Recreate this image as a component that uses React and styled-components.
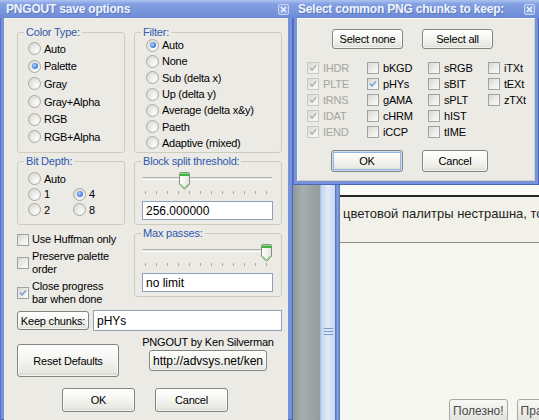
import React from 'react';
import styled, { createGlobalStyle } from 'styled-components';

const GlobalStyle = createGlobalStyle`
  html, body { margin: 0; padding: 0; background: #ebeae5; }
  body { font-family: "Liberation Sans", Arial, sans-serif; font-size: 11px; color: #000; }
`;

const Screen = styled.div`
  display: flex;
  width: 539px;
  height: 420px;
  overflow: hidden;
`;

/* ---------- window chrome ---------- */

const Window = styled.div`
  flex: none;
  width: ${p => p.$w}px;
  display: flex;
  flex-direction: column;
  background: #7592da;
  box-shadow: inset 1px 0 #5573c2, inset -1px 0 #4a68b4, inset 0 -1px #4a68b4;
`;

const TitleBar = styled.div`
  height: 18px;
  flex: none;
  display: flex;
  align-items: center;
  justify-content: space-between;
  padding: 0 4px 0 ${p => p.$pad}px;
  background: linear-gradient(#aec4f0, #83a0e2 22%, #7694db 70%, #6c8ad5);
`;

const TitleText = styled.span`
  font: bold 12px "Liberation Sans", Arial, sans-serif;
  letter-spacing: -0.2px;
  color: #f0f4fc;
  text-shadow: 1px 1px 0 rgba(40, 60, 130, 0.35);
  white-space: nowrap;
`;

const CloseBox = styled.span`
  width: 11px;
  height: 11px;
  box-sizing: border-box;
  border: 1px solid #cad7f4;
  border-radius: 2px;
  background: #8aa6e4;
  display: flex;
  align-items: center;
  justify-content: center;
`;

const Panel = styled.div`
  flex: 1;
  margin: 0 ${p => p.$r}px ${p => p.$b}px ${p => p.$l}px;
  background: #ebeae5;
  padding: ${p => p.$padding};
  display: flex;
  flex-direction: column;
  box-shadow: ${p => (p.$inset ? 'inset 1px 1px #f7f7f4, inset -1px -1px #cfcfc8' : 'none')};
`;

/* ---------- groups ---------- */

const Grid = styled.div`
  display: grid;
  grid-template-columns: 108px 148px;
  column-gap: 9px;
  row-gap: 2px;
  align-items: start;
`;

const Group = styled.fieldset`
  margin: 0;
  padding: 0;
  min-width: 0;
  height: ${p => p.$h}px;
  box-sizing: border-box;
  border: 1px solid #cdcdbf;
  border-radius: 3px;
`;

const Legend = styled.legend`
  margin-left: 6px;
  padding: 0 2px;
  line-height: 12px;
  letter-spacing: -0.2px;
  color: #2f58ad;
`;

const Options = styled.div`
  padding: ${p => p.$top}px 0 0 ${p => p.$left}px;
  margin-top: ${p => p.$mt || 0}px;
`;

const TwoCol = styled.div`
  display: grid;
  grid-template-columns: 45px 45px;
`;

const OptionRow = styled.div`
  display: flex;
  align-items: center;
  gap: 3px;
  height: ${p => p.$h}px;
  white-space: nowrap;
  letter-spacing: -0.25px;
`;

const RadioDot = styled.span`
  flex: none;
  width: 13px;
  height: 13px;
  box-sizing: border-box;
  border-radius: 50%;
  border: 1px solid #a9aba6;
  background: radial-gradient(circle at 70% 70%, #fdfdfc, #e4e4df 60%, #d3d3cc);
  display: flex;
  align-items: center;
  justify-content: center;
  &::after {
    content: '';
    display: ${p => (p.$on ? 'block' : 'none')};
    width: 6px;
    height: 6px;
    border-radius: 50%;
    background: radial-gradient(circle at 40% 40%, #b7d6ff, #4c86e0 55%, #2458c0);
  }
`;

const Box = styled.span`
  flex: none;
  width: 12px;
  height: 12px;
  box-sizing: border-box;
  border: 1px solid ${p => (p.$dim ? '#c9c9c3' : '#9ea2a8')};
  background: linear-gradient(135deg, #d9d9d3, #efefeb 60%, #fbfbfa);
  display: flex;
  align-items: center;
  justify-content: center;
`;

const CheckRow = styled.div`
  display: flex;
  align-items: center;
  gap: ${p => p.$gap}px;
  line-height: 13px;
  letter-spacing: -0.2px;
  white-space: nowrap;
  color: ${p => (p.$dim ? '#a6a6a0' : '#000')};
`;

const CheckColumn = styled.div`
  display: flex;
  flex-direction: column;
  gap: 4px;
  padding-top: 6px;
`;

/* ---------- slider ---------- */

const Slider = styled.div`
  position: relative;
  width: 129px;
  height: 29px;
  box-sizing: border-box;
  margin: 5px 0 0 8px;
  padding-top: 5px;
`;

const Track = styled.div`
  height: 3px;
  box-sizing: border-box;
  border-top: 1px solid #b3b3ab;
  border-bottom: 1px solid #fff;
  background: #e2e2da;
`;

const Ticks = styled.div`
  display: flex;
  justify-content: space-between;
  margin-top: 11px;
  padding: 0 5px 0 2px;
  & > i {
    width: 1px;
    height: 3px;
    background: #a8a8a0;
  }
`;

const Thumb = styled.svg`
  position: absolute;
  top: 0;
  left: ${p => p.$x}px;
`;

const Field = styled.div`
  height: ${p => p.$h}px;
  width: ${p => (p.$w ? `${p.$w}px` : 'auto')};
  flex: ${p => (p.$w ? 'none' : 1)};
  margin-left: ${p => p.$ml || 0}px;
  box-sizing: border-box;
  border: 1px solid #8ea0b6;
  background: #fff;
  padding-left: 3px;
  display: flex;
  align-items: center;
  font-size: 12px;
`;

/* ---------- buttons ---------- */

const Button = styled.button`
  flex: none;
  width: ${p => p.$w}px;
  height: ${p => p.$h}px;
  padding: 0;
  font: ${p => p.$fs || 11}px "Liberation Sans", Arial, sans-serif;
  letter-spacing: ${p => (p.$fs ? 0 : -0.2)}px;
  color: #000;
  border: 1px solid #84847e;
  border-radius: 3px;
  background: linear-gradient(#ffffff, #f5f5f1 45%, #e9e9e3 85%, #d5d5cd);
  box-shadow: ${p => (p.$focus
    ? 'inset 0 0 0 1px #cfe0f6, inset 0 0 0 2px #93b4e2'
    : 'inset 0 0 0 1px rgba(255,255,255,0.7)')};
`;

const KeepRow = styled.div`
  display: flex;
  align-items: center;
  gap: 4px;
  margin-top: 4px;
  width: 265px;
  height: 21px;
`;

const CreditRow = styled.div`
  display: grid;
  grid-template-columns: 108px 148px;
  column-gap: 9px;
  margin-top: 5px;
`;

const Credit = styled.div`
  display: flex;
  flex-direction: column;
  align-items: center;
  gap: 1px;
  line-height: 13px;
  letter-spacing: -0.2px;
`;

const ResetSlot = styled.div`
  padding-top: 8px;
`;

const ButtonRow = styled.div`
  display: flex;
  gap: ${p => p.$gap}px;
  margin-top: ${p => p.$mt}px;
  padding-left: ${p => p.$pl}px;
`;

/* ---------- chunks dialog ---------- */

const RightSide = styled.div`
  flex: 1;
  display: flex;
  flex-direction: column;
  min-width: 0;
`;

const ChunkGrid = styled.div`
  display: grid;
  grid-template-columns: 60px 61px 60px 1fr;
  grid-template-rows: repeat(5, 16px);
  grid-auto-flow: column;
  margin-top: 11px;
  padding-left: 10px;
`;

/* ---------- window behind ---------- */

const Behind = styled.div`
  flex: 1;
  display: flex;
  min-height: 0;
`;

const Wallpaper = styled.div`
  width: 27px;
  flex: none;
  background: linear-gradient(90deg, #8f9999, #a6aead 35%, #9ba4a3 70%, #949d9c);
`;

const Rail = styled.div`
  width: 15px;
  flex: none;
  box-sizing: border-box;
  border-left: 1px solid #a9bfdf;
  background: linear-gradient(90deg, #c2d4ec, #e0eaf7 45%, #c9d9ee);
  display: flex;
  justify-content: center;
  padding-top: 143px;
`;

const RailEdge = styled.div`
  width: 5px;
  flex: none;
  background: linear-gradient(90deg, #4f70b6, #86a3de 50%, #5676be);
`;

const Page = styled.div`
  flex: 1;
  display: flex;
  flex-direction: column;
  background: #f7f7f2;
  overflow: hidden;
  font-family: "Liberation Sans", Arial, sans-serif;
`;

const PageTop = styled.div`
  height: 10px;
  flex: none;
  background: #fafaf7;
  border-bottom: 2px solid #262626;
`;

const Quote = styled.div`
  height: 46px;
  flex: none;
  box-sizing: border-box;
  background: #f2f1e9;
  border-bottom: 1px solid #8c8c86;
  padding: 9px 0 0 3px;
  font-size: 13px;
  line-height: 15px;
  color: #1e1e1e;
  white-space: nowrap;
`;

const PageActions = styled.div`
  margin-top: auto;
  margin-bottom: -2px;
  display: flex;
  gap: 9px;
  padding-left: 109px;
`;

const PageButton = styled.span`
  flex: none;
  height: 23px;
  box-sizing: border-box;
  padding: 0 3px;
  display: flex;
  align-items: center;
  border: 1px solid #a9a9a3;
  border-radius: 3px;
  background: linear-gradient(#f8f8f6, #e2e2dd);
  font-size: 12px;
  color: #4a4a4a;
  white-space: nowrap;
`;

/* ---------- small pieces ---------- */

const CloseIcon = () => (
  <CloseBox>
    <svg width="7" height="7" viewBox="0 0 7 7">
      <path d="M1 1L6 6M6 1L1 6" stroke="#f2f6ff" strokeWidth="1.4" />
    </svg>
  </CloseBox>
);

const Radio = ({ on, h, children }) => (
  <OptionRow $h={h}>
    <RadioDot $on={on} />
    <span>{children}</span>
  </OptionRow>
);

const Check = ({ on, dim, gap = 3, children }) => (
  <CheckRow $gap={gap} $dim={dim}>
    <Box $dim={dim}>
      {on && (
        <svg width="8" height="8" viewBox="0 0 8 8">
          <path d="M1 3.6L3 6L7 1.3" fill="none" stroke={dim ? '#b4b4ae' : '#7ea3d8'} strokeWidth="1.6" />
        </svg>
      )}
    </Box>
    <span>{children}</span>
  </CheckRow>
);

const SliderThumb = ({ x }) => (
  <Thumb $x={x} width="11" height="18" viewBox="0 0 11 18">
    <defs>
      <linearGradient id="tb" x1="0" y1="0" x2="1" y2="0">
        <stop offset="0" stopColor="#ffffff" />
        <stop offset="1" stopColor="#e3e3dc" />
      </linearGradient>
    </defs>
    <path d="M1.5 0.5H9.5Q10.5 0.5 10.5 1.5V12.3L5.5 17.3L0.5 12.3V1.5Q0.5 0.5 1.5 0.5Z" fill="url(#tb)" stroke="#7f8e86" />
    <rect x="1" y="1" width="9" height="3" fill="#3fb43c" />
    <rect x="1" y="1" width="9" height="1" fill="#8bdc80" />
    <path d="M1.5 12L5.5 16L9.5 12" fill="none" stroke="#5cbf4c" />
  </Thumb>
);

const SliderBlock = ({ x, value }) => (
  <>
    <Slider>
      <Track />
      <Ticks>{Array.from({ length: 12 }, (_, i) => <i key={i} />)}</Ticks>
      <SliderThumb x={x} />
    </Slider>
    <Field $h={19} $w={131} $ml={7}>{value}</Field>
  </>
);

const chunkCols = [
  [['IHDR', 1, 1], ['PLTE', 1, 1], ['tRNS', 1, 1], ['IDAT', 1, 1], ['IEND', 1, 1]],
  [['bKGD'], ['pHYs', 1], ['gAMA'], ['cHRM'], ['iCCP']],
  [['sRGB'], ['sBIT'], ['sPLT'], ['hIST'], ['tIME']],
  [['iTXt'], ['tEXt'], ['zTXt']],
];

export default function App() {
  return (
    <Screen>
      <GlobalStyle />
      <Window $w={293}>
        <TitleBar $pad={6}>
          <TitleText>PNGOUT save options</TitleText>
          <CloseIcon />
        </TitleBar>
        <Panel $l={4} $r={5} $b={0} $padding="8px 0 0 13px">
          <Grid>
            <Group $h={127}>
              <Legend>Color Type:</Legend>
              <Options $top={2} $left={10}>
                {['Auto', 'Palette', 'Gray', 'Gray+Alpha', 'RGB', 'RGB+Alpha'].map(t => (
                  <Radio key={t} h={17.6} on={t === 'Palette'}>{t}</Radio>
                ))}
              </Options>
            </Group>
            <Group $h={127}>
              <Legend>Filter:</Legend>
              <Options $top={0} $mt={-1} $left={11}>
                {['Auto', 'None', 'Sub (delta x)', 'Up (delta y)', 'Average (delta x&y)', 'Paeth', 'Adaptive (mixed)'].map(t => (
                  <Radio key={t} h={16.3} on={t === 'Auto'}>{t}</Radio>
                ))}
              </Options>
            </Group>

            <Group $h={70}>
              <Legend>Bit Depth:</Legend>
              <Options $top={4} $left={10}>
                <Radio h={15.5}>Auto</Radio>
                <TwoCol>
                  <Radio h={15.5}>1</Radio>
                  <Radio h={15.5} on>4</Radio>
                  <Radio h={15.5}>2</Radio>
                  <Radio h={15.5}>8</Radio>
                </TwoCol>
              </Options>
            </Group>
            <Group $h={70}>
              <Legend>Block split threshold:</Legend>
              <SliderBlock x={36} value="256.000000" />
            </Group>

            <CheckColumn>
              <Check>Use Huffman only</Check>
              <Check>Preserve palette<br />order</Check>
              <Check on>Close progress<br />bar when done</Check>
            </CheckColumn>
            <Group $h={70}>
              <Legend>Max passes:</Legend>
              <SliderBlock x={118} value="no limit" />
            </Group>
          </Grid>

          <KeepRow>
            <Button $w={72} $h={19}>Keep chunks:</Button>
            <Field $h={21}>pHYs</Field>
          </KeepRow>

          <CreditRow>
            <ResetSlot>
              <Button $w={102} $h={33}>Reset Defaults</Button>
            </ResetSlot>
            <Credit>
              <span>PNGOUT by Ken Silverman</span>
              <Button $w={118} $h={21} $fs={12}>http://advsys.net/ken</Button>
            </Credit>
          </CreditRow>

          <ButtonRow $gap={20} $mt={11} $pl={45}>
            <Button $w={73} $h={24}>OK</Button>
            <Button $w={73} $h={24}>Cancel</Button>
          </ButtonRow>
        </Panel>
      </Window>

      <RightSide>
        <Window $w={246}>
          <TitleBar $pad={5}>
            <TitleText>Select common PNG chunks to keep:</TitleText>
            <CloseIcon />
          </TitleBar>
          <Panel $l={4} $r={4} $b={4} $padding="11px 0 9px 0" $inset>
            <ButtonRow $gap={19} $mt={0} $pl={35}>
              <Button $w={71} $h={20}>Select none</Button>
              <Button $w={71} $h={20}>Select all</Button>
            </ButtonRow>
            <ChunkGrid>
              {chunkCols.flat().map(([name, on, dim]) => (
                <Check key={name} on={!!on} dim={!!dim} gap={4}>{name}</Check>
              ))}
            </ChunkGrid>
            <ButtonRow $gap={19} $mt={10} $pl={34}>
              <Button $w={72} $h={22} $focus>OK</Button>
              <Button $w={66} $h={22}>Cancel</Button>
            </ButtonRow>
          </Panel>
        </Window>

        <Behind>
          <Wallpaper />
          <Rail>
            <svg width="9" height="7" viewBox="0 0 9 7">
              <path d="M0 0.5H9M0 3.5H9M0 6.5H9" stroke="#7c9acb" />
            </svg>
          </Rail>
          <RailEdge />
          <Page>
            <PageTop />
            <Quote>цветовой палитры нестрашна, то есть</Quote>
            <PageActions>
              <PageButton>Полезно!</PageButton>
              <PageButton>Правильно</PageButton>
            </PageActions>
          </Page>
        </Behind>
      </RightSide>
    </Screen>
  );
}
